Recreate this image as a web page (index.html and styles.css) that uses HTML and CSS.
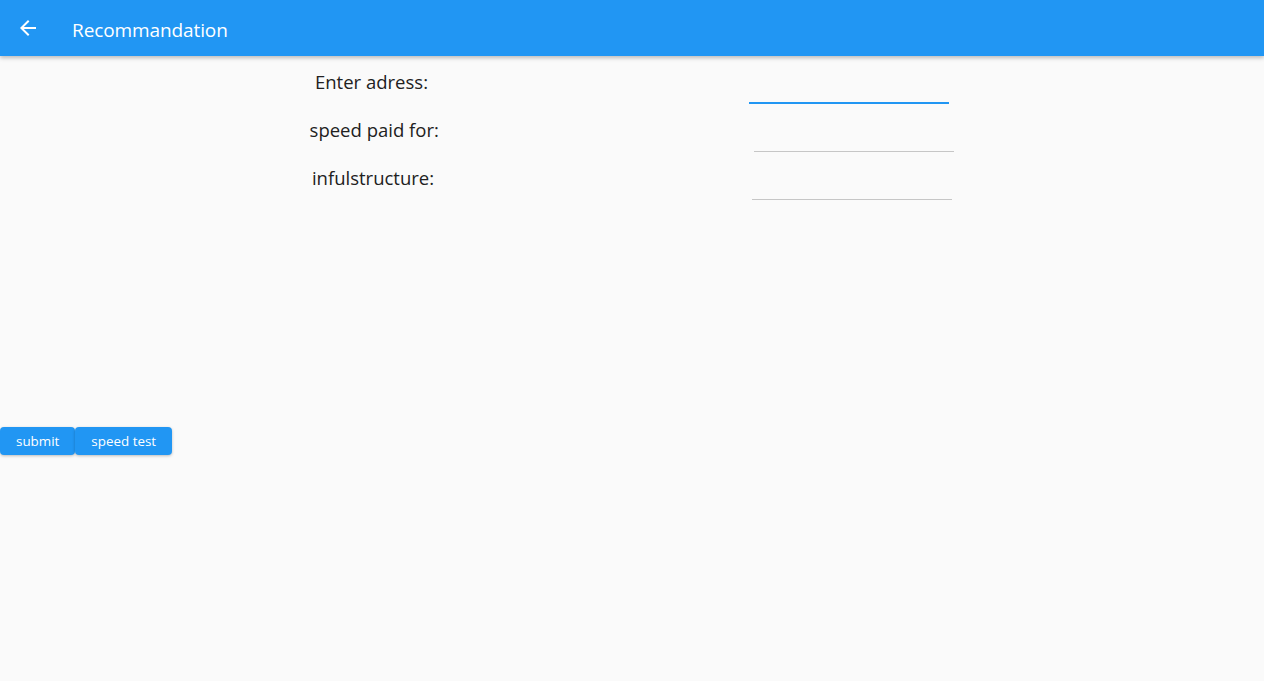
FILE: index.html
```html
<!DOCTYPE html>
<html>
<head>
<meta charset="utf-8">
<link rel="stylesheet" href="styles.css">
</head>
<body>
<header class="appbar">
  <svg class="back" width="24" height="24" viewBox="0 0 24 24"><path d="M20 11H7.83l5.59-5.59L12 4l-8 8 8 8 1.41-1.41L7.83 13H20v-2z" fill="#fff"/></svg>
  <h1 class="title">Recommandation</h1>
</header>
<main class="content">
  <div class="row">
    <span class="label">Enter adress:</span>
    <div class="field focused"></div>
  </div>
  <div class="row">
    <span class="label">speed paid for:</span>
    <div class="field"></div>
  </div>
  <div class="row">
    <span class="label">infulstructure:</span>
    <div class="field"></div>
  </div>
  <div class="buttons">
    <button class="btn">submit</button>
    <button class="btn">speed test</button>
  </div>
</main>
</body>
</html>
```
FILE: styles.css
```css
html, body {
  margin: 0;
  padding: 0;
  background: #fafafa;
  font-family: "Open Sans", "Noto Sans", sans-serif;
  height: 100%;
  overflow: hidden;
}
.appbar {
  height: 56px;
  background: #2196f3;
  display: flex;
  align-items: center;
  box-shadow: 0 2px 4px rgba(0,0,0,0.25);
  position: relative;
  z-index: 1;
}
.back {
  margin-left: 16px;
  margin-top: 0;
}
.title {
  margin: 3px 0 0 32px;
  font-size: 19px;
  font-weight: 400;
  color: #fff;
  letter-spacing: -0.1px;
}
.content {
  display: flex;
  flex-direction: column;
}
.row {
  display: flex;
  justify-content: space-evenly;
  align-items: center;
  height: 48px;
}
.label {
  font-size: 18.5px;
  color: #212121;
  margin-top: 2px;
  padding-right: 6px;
}
.field {
  width: 200px;
  height: 48px;
  box-sizing: border-box;
  border-bottom: 1px solid #c6c6c6;
}
.field.focused {
  border-bottom: 2px solid #2196f3;
}
.buttons {
  display: flex;
  margin-top: 227px;
}
.btn {
  height: 28px;
  padding: 0 16px;
  border: none;
  border-radius: 4px;
  background: #2196f3;
  color: #fff;
  font-family: "Open Sans", "Noto Sans", sans-serif;
  font-size: 13.4px;
  box-shadow: 0 1px 3px rgba(0,0,0,0.25);
}
```
